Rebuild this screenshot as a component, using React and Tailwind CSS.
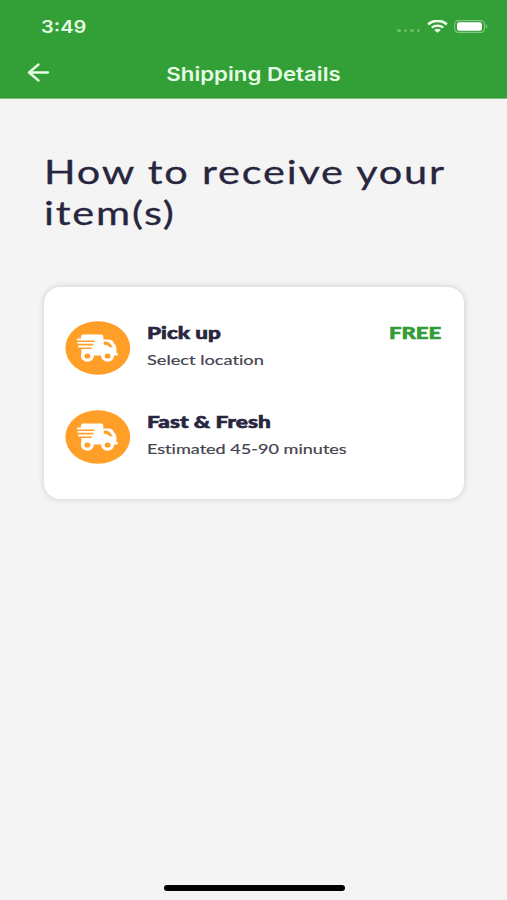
function StatusBar() {
  return (
    <div className="flex h-[50px] items-center justify-between pl-[41px] pr-[19px] pt-[3px]">
      <span className="inline-block origin-left scale-x-[1.18] font-['Inter'] text-[17px] font-semibold leading-6 text-[#e6fbe3]">
        3:49
      </span>
      <div className="flex items-center">
        <div className="mt-[8px] flex gap-[3px]">
          <i className="h-[3px] w-[3.5px] rounded-full bg-[#6abf67]" />
          <i className="h-[3px] w-[3.5px] rounded-full bg-[#6abf67]" />
          <i className="h-[3px] w-[3.5px] rounded-full bg-[#6abf67]" />
          <i className="h-[3px] w-[3.5px] rounded-full bg-[#6abf67]" />
        </div>
        <svg className="ml-[7px]" width="21" height="13" viewBox="0 0 21 13" fill="none" stroke="#effdee">
          <path d="M1.2 4.4C6.2-.3 14.8-.3 19.8 4.4" strokeWidth="2.7" />
          <path d="M4.8 7.7C8 4.9 13 4.9 16.2 7.7" strokeWidth="2.4" />
          <path d="M10.5 12.8 7.2 9.9C9.2 8.4 11.8 8.4 13.8 9.9Z" fill="#effdee" stroke="none" />
        </svg>
        <svg className="ml-[6px]" width="34" height="13" viewBox="0 0 34 13">
          <rect x=".6" y=".6" width="30" height="11.8" rx="3.8" fill="none" stroke="#84c982" strokeWidth="1.1" />
          <rect x="3" y="2.3" width="25" height="8.4" rx="2.2" fill="#fff" />
          <path d="M32 4.5c1.8.6 1.8 3.4 0 4Z" fill="#84c982" />
        </svg>
      </div>
    </div>
  );
}

function Truck() {
  return (
    <svg className="mt-[1px] shrink-0" width="66" height="54" viewBox="0 0 66 54">
      <ellipse cx="32.8" cy="27" rx="32.4" ry="26.7" fill="#ff9f27" />
      <g fill="#fff">
        <path d="M18 13.5H36.3Q38.3 13.5 38.3 15.5V18.5H44Q46.3 18.5 47.6 20L50.6 24.5Q51.4 25.5 51.4 27V31.8Q53 31.8 53 33T52 34.6H16.4V28H26.5L27 26.4H13.5Q12.2 25.5 13.5 24.5H28L28.6 22.8H12.8Q11.6 21.9 12.8 21H29.2L29.8 19.4H12.3Q11.2 18.5 12.3 17.6H16V15.5Q16 13.5 18 13.5Z" />
        <ellipse cx="22.4" cy="35" rx="6.5" ry="5.7" />
        <ellipse cx="42.6" cy="35" rx="6.5" ry="5.7" />
      </g>
      <path d="M38.8 20.6Q42 20.4 44 21.6L48 26.3H44.5Q43.3 24.2 38.8 23.8Z" fill="#ff9f27" />
      <ellipse cx="22.4" cy="35" rx="3" ry="2.6" fill="#ff9f27" />
      <ellipse cx="42.6" cy="35" rx="3" ry="2.6" fill="#ff9f27" />
    </svg>
  );
}

function Option({ title, titleClass, text, textClass, price }) {
  return (
    <div className="flex h-[54px] items-start">
      <Truck />
      <div className="ml-[16px] flex-1 whitespace-nowrap [font-variant-ligatures:none]">
        <h2 className={`origin-left font-['Lato'] text-[17px] font-black leading-[26px] text-[#28263f] [-webkit-text-stroke:0.6px_#28263f] ${titleClass}`}>
          {title}
        </h2>
        <p className={`origin-left font-['Lato'] text-[14px] leading-[27px] text-[#45434f] [-webkit-text-stroke:0.2px_#45434f] ${textClass}`}>
          {text}
        </p>
      </div>
      {price && (
        <span className="inline-block origin-right scale-x-[1.3] font-['Lato'] text-[17px] font-black leading-[26px] text-[#319c38] [-webkit-text-stroke:0.6px_#319c38]">
          {price}
        </span>
      )}
    </div>
  );
}

export default function App() {
  return (
    <div className="flex h-[900px] w-[507px] flex-col overflow-hidden bg-[#f4f4f4]">
      <header className="h-[99px] shrink-0 border-b border-[#7fc07f] bg-[#339f37]">
        <StatusBar />
        <div className="grid h-[47px] grid-cols-[80px_1fr_80px] items-center">
          <svg className="-mt-[2px] ml-[27px]" width="23" height="19" viewBox="0 0 23 19" fill="none" stroke="#e6fbe3" strokeWidth="2.3" strokeLinecap="round" strokeLinejoin="round">
            <path d="M21 9.5H2M11.5 1.5 2 9.5 11.5 17.5" />
          </svg>
          <h1 className="mt-[2px] scale-x-[1.17] text-center font-['Inter'] text-[19px] font-semibold leading-6 text-[#e6fbe3]">
            Shipping Details
          </h1>
        </div>
      </header>
      <main className="px-[43px] pt-[52px]">
        <div className="ml-[0.5px] origin-left scale-x-[1.295] whitespace-nowrap font-['Lato'] text-[32px] leading-[41px] tracking-[1.4px] text-[#28263f] [-webkit-text-stroke:0.3px_#28263f]">
          How to receive your
          <br />
          item(s)
        </div>
        <section className="ml-[0.5px] mt-[53.5px] flex h-[212px] w-[420.5px] flex-col gap-[35px] rounded-[16px] bg-white pl-[21px] pr-[22.5px] pt-[33px] shadow-[0_0_6px_rgba(0,0,0,0.17)]">
          <Option title="Pick up" titleClass="scale-x-[1.32]" text="Select location" textClass="scale-x-[1.3]" price="FREE" />
          <Option
            title="Fast & Fresh"
            titleClass="scale-x-[1.33]"
            text="Estimated 45-90 minutes"
            textClass="scale-x-[1.29]"
          />
        </section>
      </main>
      <div className="mx-auto mb-[9px] mt-auto h-[6px] w-[181px] translate-x-px rounded-full bg-black" />
    </div>
  );
}
